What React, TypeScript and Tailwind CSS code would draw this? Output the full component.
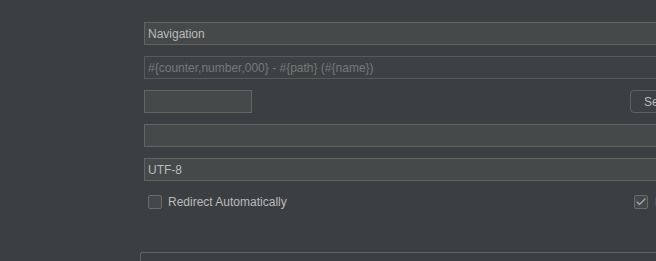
import { Check } from 'lucide-react'

const field =
  'h-[23px] border border-[#646464] bg-[#45494a] px-[3px] pt-[1px] text-[12px] leading-[20px] text-[#bbbbbb]'

function CheckBox({ checked = false }: { checked?: boolean }) {
  return (
    <span className="flex h-[14px] w-[14px] shrink-0 items-center justify-center rounded-[2px] border border-[#6b6b6b] bg-[#43494a]">
      {checked && <Check size={12} strokeWidth={2.6} className="text-[#a9a9a9]" />}
    </span>
  )
}

export default function App() {
  return (
    <div
      className="h-[261px] w-[656px] overflow-hidden bg-[#3c3f41]"
      style={{ fontFamily: '"Liberation Sans", Arial, sans-serif' }}
    >
      <div className="flex w-[640px] flex-col gap-[11px] pl-[144px] pt-[22px]">
        <div className={`${field} w-[600px]`}>Navigation</div>
        <div className="h-[23px] w-[600px] border border-[#575a5b] bg-[#3e4143] px-[3px] pt-[1px] text-[12px] leading-[20px] text-[#767878]">
          #{'{'}counter,number,000{'}'} - #{'{'}path{'}'} (#{'{'}name{'}'})
        </div>
        <div className="flex w-[600px] items-center">
          <div className={`${field} w-[108px]`} />
          <button
            type="button"
            className="ml-[378px] h-[23px] w-[90px] shrink-0 rounded-[4px] border border-[#5e6162] bg-[#3e4143] pl-[13px] pt-[1px] text-left text-[12px] leading-[20px] text-[#bbbbbb]"
          >
            Select...
          </button>
        </div>
        <div className={`${field} w-[600px]`} />
        <div className={`${field} w-[600px]`}>UTF-8</div>
        <div className="mt-[3px] flex h-[14px] w-[600px] items-center pl-[4px] text-[12px] text-[#bbbbbb]">
          <CheckBox />
          <span className="ml-[6px] w-[466px] shrink-0">Redirect Automatically</span>
          <CheckBox checked />
          <span className="ml-[7px] shrink-0">Follow Redirects</span>
        </div>
      </div>
      <div className="ml-[140px] mt-[43px] h-[40px] w-[600px] rounded-tl-[3px] border-l border-t border-[#646464]" />
    </div>
  )
}
